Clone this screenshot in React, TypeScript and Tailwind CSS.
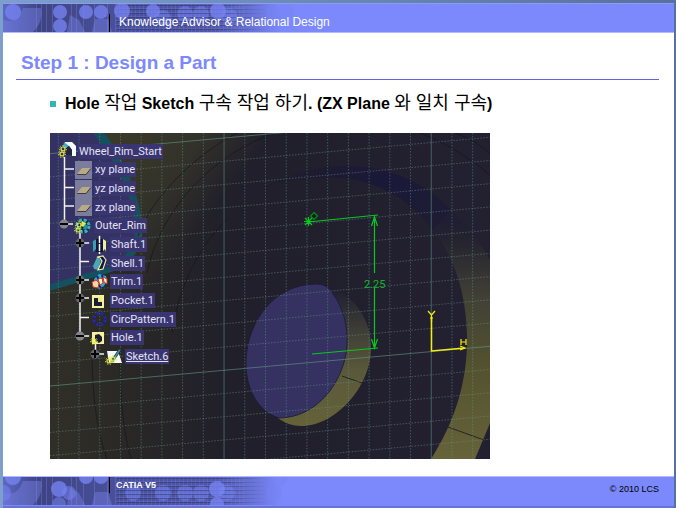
import type { ReactNode } from "react";

interface TreeNode {
  label: string;
  level: 0 | 1 | 2 | 3;
  icon: ReactNode;
  active?: boolean;
}

const INDENTS = {
  0: "pl-[9px]",
  1: "pl-[25px]",
  2: "pl-[41px]",
  3: "pl-[56px]",
};

function Gear({ x, y }: { x: number; y: number }) {
  return (
    <g transform={`translate(${x} ${y})`} fill="none" stroke="#e8ee3c">
      <circle r="2" strokeWidth="1.2" />
      <circle r="3.4" strokeWidth="1" strokeDasharray="1.4 1.6" />
    </g>
  );
}

function Icon({ children }: { children: ReactNode }) {
  return (
    <svg viewBox="0 0 18 18" className="size-[18px] shrink-0 overflow-visible" aria-hidden="true">
      {children}
    </svg>
  );
}

const partIcon = (
  <Icon>
    <path d="M6 0h7l4 4v10h-4V8l-3-4H6z" fill="#f4fbff" />
    <path d="M5 0l5 4-2 3-4-2z" fill="#3fa9bd" />
    <path d="M7 6l3-2 3 4v5H7z" fill="#24243c" />
    <Gear x={4} y={7} />
    <Gear x={3} y={12} />
  </Icon>
);

const planeIcon = (
  <Icon>
    <rect width="17" height="18" fill="#7c7c9c" />
    <path d="M2 13l5-6h9l-5 6z" fill="#b8aa86" />
    <path d="M2 13.500h9l5-6" fill="none" stroke="#3b3b44" />
  </Icon>
);

const bodyIcon = (
  <Icon>
    <circle cx="8" cy="9" r="7" fill="#15294e" />
    <circle cx="8" cy="9" r="6" fill="none" stroke="#39b0bd" strokeWidth="3" strokeDasharray="3 1.700" />
    <path d="M7 4l4 2-1 4-4-1z" fill="#d9ed50" />
    <path d="M10 7l3 2-2 4-3-1z" fill="#2a8c9f" />
    <Gear x={4} y={8} />
    <Gear x={3} y={13} />
  </Icon>
);

const shaftIcon = (
  <Icon>
    <path d="M2 5l4-2v12l-1-2-3 3z" fill="#3e9eb1" />
    <path d="M5 3h3v13H5zM9 3h3v13H9z" fill="#11163f" />
    <path d="M12 3l3 2v11l-1-3-2 2z" fill="#f2efa0" />
    <path d="M8.500 0v18" stroke="#fff" strokeWidth="1.500" strokeDasharray="7 1" />
  </Icon>
);

const shellIcon = (
  <Icon>
    <path d="M2 12L6 3l7-1 3 5-3 7-6 3z" fill="#0e1550" />
    <path d="M2 12L6 3l4 3-3 10-4-1z" fill="#4aa7b4" />
    <path d="M6 3l6-1 3 4-3 9-5 1 4-9-2-3z" fill="none" stroke="#f2efa0" strokeWidth="1.200" />
  </Icon>
);

const trimIcon = (
  <Icon>
    <path d="M3 6l5-5 7 2 1 4-3 6-5 3-4-4z" fill="#32a2d9" />
    <path d="M6 3l2 4M11 2l1 4M7 11l3 4" stroke="#0d2a69" strokeWidth="2" />
    <path d="M1 9l4-2 3 3-1 5-5-1z" fill="#f4d7a2" stroke="#c43b2c" />
    <path d="M7 6l4-1 1 5-3 2zM12 4l4 2v5l-3-2z" fill="#fff3c9" stroke="#c43b2c" />
  </Icon>
);

const pocketIcon = (
  <Icon>
    <path d="M1 3h12v13H1z" fill="#f5f1a0" />
    <path d="M3 6h4v4h4v4H3z" fill="#181d35" />
    <path d="M7 5h4v5H7z" fill="#eee982" />
  </Icon>
);

const patternIcon = (
  <Icon>
    <circle cx="8.500" cy="9" r="5.800" fill="none" stroke="#2528c8" strokeWidth="2.600" strokeDasharray="3 1.550" />
    <circle cx="8.500" cy="9" r="5.800" fill="none" stroke="#11112e" strokeWidth="1" strokeDasharray="1.200 3.350" />
  </Icon>
);

const holeIcon = (
  <Icon>
    <path d="M1 3h12v12H1z" fill="#f5f1a0" />
    <path d="M4 6l4-1 3 3v4l-3 2-4-2z" fill="#181d35" />
    <Gear x={3} y={12} />
  </Icon>
);

const sketchIcon = (
  <Icon>
    <path d="M1 3h11l4 12H3z" fill="#f6f8f5" />
    <path d="M5 13l8-12 2 1-8 12z" fill="#3b8fa5" stroke="#1d3550" strokeWidth="0.800" />
    <path d="M3 15l2-2 2 1z" fill="#222" />
    <Gear x={3} y={13} />
    <Gear x={7} y={11} />
  </Icon>
);

const NODES: TreeNode[] = [
  { label: "Wheel_Rim_Start", level: 0, icon: partIcon },
  { label: "xy plane", level: 1, icon: planeIcon },
  { label: "yz plane", level: 1, icon: planeIcon },
  { label: "zx plane", level: 1, icon: planeIcon },
  { label: "Outer_Rim", level: 1, icon: bodyIcon },
  { label: "Shaft.1", level: 2, icon: shaftIcon },
  { label: "Shell.1", level: 2, icon: shellIcon },
  { label: "Trim.1", level: 2, icon: trimIcon },
  { label: "Pocket.1", level: 2, icon: pocketIcon },
  { label: "CircPattern.1", level: 2, icon: patternIcon },
  { label: "Hole.1", level: 2, icon: holeIcon },
  { label: "Sketch.6", level: 3, icon: sketchIcon, active: true },
];

function SpecTree() {
  return (
    <ul className="absolute top-[9px] left-0 grid h-[224px] grid-rows-12 font-[Roboto,sans-serif] text-[11px] leading-[15px] text-[#e4e3f4]">
      {NODES.map((node) => (
        <li key={node.label} className={`flex min-h-0 items-center gap-px ${INDENTS[node.level]}`}>
          {node.icon}
          <span className={`bg-[#393570] px-px whitespace-nowrap ${node.active ? "underline" : ""}`}>{node.label}</span>
        </li>
      ))}
    </ul>
  );
}

function Toggle({ x, y, open }: { x: number; y: number; open?: boolean }) {
  return (
    <g transform={`translate(${x} ${y})`}>
      <path d="M4 0h5" stroke="#f0f0f0" strokeWidth="1.500" />
      <circle r="4.500" fill={open ? "#84848a" : "#66676c"} />
      <path d={open ? "M-4 0h8" : "M-4 0h8M0 -4v8"} stroke="#050505" strokeWidth="2" />
    </g>
  );
}

const GRID_X = Array.from({ length: 22 }, (_, i) => 8.3 + i * 20.72);
const GRID_Y = Array.from({ length: 17 }, (_, i) => 20.7 + i * 23.23);

function Scene() {
  return (
    <svg viewBox="0 0 440 326" className="block w-full" role="img" aria-label="Sketch of the hole position on the wheel rim">
      <defs>
        <linearGradient id="ground" x1="0" y1="0" x2="1" y2="0">
          <stop offset="0" stopColor="#302f27" />
          <stop offset="0.150" stopColor="#2a2926" />
          <stop offset="0.400" stopColor="#211f2a" />
          <stop offset="1" stopColor="#232031" />
        </linearGradient>
        <linearGradient id="upper" gradientUnits="userSpaceOnUse" x1="70" y1="0" x2="165" y2="75">
          <stop offset="0" stopColor="#3a392a" />
          <stop offset="0.500" stopColor="#34332a" />
          <stop offset="1" stopColor="#34332a" stopOpacity="0" />
        </linearGradient>
        <linearGradient id="rim" x1="0" y1="0" x2="0" y2="1">
          <stop offset="0" stopColor="#1d1c34" />
          <stop offset="0.120" stopColor="#24232f" />
          <stop offset="0.350" stopColor="#414035" />
          <stop offset="0.650" stopColor="#55532f" />
          <stop offset="1" stopColor="#66633a" />
        </linearGradient>
        <linearGradient id="wall" x1="0" y1="0" x2="0" y2="1">
          <stop offset="0" stopColor="#1c1b31" />
          <stop offset="0.250" stopColor="#363535" />
          <stop offset="0.600" stopColor="#59583a" />
          <stop offset="1" stopColor="#656239" />
        </linearGradient>
        <linearGradient id="shade" x1="0" y1="0" x2="1" y2="0.500">
          <stop offset="0" stopColor="#201e2c" />
          <stop offset="0.600" stopColor="#1a1838" />
          <stop offset="1" stopColor="#1d1c34" />
        </linearGradient>
      </defs>

      <rect width="440" height="326" fill="url(#ground)" />
      <path d="M50 0h200L96 160 80 130z" fill="url(#upper)" />
      <path d="M43 0h11c20 25 38 65 38 97 0 24-16 38-34 43L0 158v-7z" fill="#15505f" />
      <path d="M0 0h43c20 24 39 60 42 94 1 24-15 37-33 42L0 151z" fill="#343163" />
      <g fill="none" stroke="#15151d" strokeWidth="0.700">
        <path d="M187 0C145 22 100 66 88 103M225 0C165 20 110 75 97 140M178 86C150 110 128 155 122 200M42 216c0 42 4 80 15 110M70 218c0 45 3 80 11 108" />
        <path d="M370 0c26 10 50 25 70 42" />
      </g>

      <path d="M215 54c20-10 45-21 80-21 42 0 78 14 106 44l-18 20c-28-36-63-52-100-52-28 0-50 3-68 9z" fill="url(#shade)" />
      <path d="M401 77c16 15 29 32 39 50v163l-15 36h-44c24-37 37-79 36-124-1-43-13-78-34-105z" fill="url(#rim)" />
      <path d="M398 294l36 13M405 0c16 6 26 12 35 21" fill="none" stroke="#171720" strokeWidth="0.800" />
      <path d="M265 151c31 2 56 29 56 64 0 38-35 78-70 78-8 0-17-3-23-8z" fill="url(#wall)" />
      <path d="M229 285c-21-6-34-30-33-58 2-41 30-76 70-76 8 0 12 3 15 7 13 17 17 35 16 55-3 37-31 72-68 72z" fill="#353160" stroke="#1b1935" strokeWidth="0.800" />
      <path d="M292 243l20 7" stroke="#171720" strokeWidth="0.800" />

      <g stroke="#659889" strokeWidth="0.800" fill="none">
        {GRID_X.map((x, i) => {
          const major = i === 8 || i === 18;
          return (
            <path
              key={x}
              d={`M${x} 0V326`}
              strokeOpacity={major ? 0.7 : 0.6}
              strokeDasharray={major ? undefined : "1.500 1.500"}
            />
          );
        })}
        {GRID_Y.map((y, i) => {
          const major = i === 0 || i === 10;
          return (
            <path
              key={y}
              d={`M0 ${y}L440 ${y - 39.7}`}
              strokeOpacity={major ? 0.75 : 0.6}
              strokeDasharray={major ? undefined : "1.500 1.500"}
            />
          );
        })}
      </g>

      <g stroke="#08c820" strokeWidth="1.200" fill="none">
        <path d="M258 89l70-7M262 221l66-6" />
        <path d="M324.500 83v57M324.500 154v61M321.500 93l3-9 3 9M321.500 206l3 9 3-9" />
        <path d="M254 88.500h9M258.500 84v9M255 85l7 7M262 85l-7 7" />
        <path d="M264 79.500l3.500 3.500-3.500 3.500-3.500-3.500z" fill="#03240c" stroke="#0a8a22" />
      </g>
      <text x="314" y="155" fill="#0fb82a" fontFamily="Roboto, sans-serif" fontSize="11">
        2.25
      </text>
      <g stroke="#f2ee10" strokeWidth="1.500" fill="none">
        <path d="M381.500 184v34l33-3" />
        <path d="M378 178l3.500 4 3.500-4M381.500 182v7M380 185h3M411 206v6M416 206v6M411 209h5M410 213l5 2-5 2" strokeWidth="1.200" />
      </g>

      <g stroke="#f2f2f2" strokeWidth="1.500">
        <path d="M14.500 24v65M15 36h9M15 54.500h9M15 73h9M30 98v104M30 128.500h9M30 184.500h9M45.500 208v12" />
      </g>
      <Toggle x={14} y={91} open />
      <Toggle x={30} y={110} />
      <Toggle x={30} y={147} />
      <Toggle x={30} y={165} />
      <Toggle x={30} y={203} open />
      <Toggle x={45} y={221} />
    </svg>
  );
}

const TOP_DOTS = [
  [10, 8, 8], [57, 8, 7], [57, 22, 7], [83, 8, 7], [98, 8, 7], [119, 7, 8], [150, 7, 7], [215, 7, 8], [283, 8, 8],
];
const TOP_FAINT = [
  [182, 10, 8], [198, 10, 8], [160, 14, 8], [226, 12, 8], [271, 10, 8],
];
const BOTTOM_DOTS = [
  [10, 0, 8], [56, 12, 8], [83, 0, 7], [98, 0, 7], [214, 12, 8], [214, 27, 7], [277, 2, 7],
];
const BOTTOM_FAINT = [
  [0, 16, 8], [66, 16, 7], [56, 27, 7], [130, 16, 8], [160, 16, 8], [182, 16, 8], [198, 16, 8], [224, 16, 8], [271, 16, 8],
];

interface BannerArtProps {
  id: string;
  dots: number[][];
  faintDots: number[][];
}

function BannerArt({ id, dots, faintDots }: BannerArtProps) {
  return (
    <svg viewBox="0 0 300 28" className="absolute top-0 left-0 h-7 w-[300px]" aria-hidden="true">
      <defs>
        <linearGradient id={`${id}-fade`}>
          <stop offset="0" stopColor="#33376c" stopOpacity="0.400" />
          <stop offset="0.120" stopColor="#33376c" stopOpacity="0.850" />
          <stop offset="0.360" stopColor="#33376c" stopOpacity="0.700" />
          <stop offset="0.700" stopColor="#33376c" stopOpacity="0.600" />
          <stop offset="0.930" stopColor="#33376c" stopOpacity="0" />
        </linearGradient>
        <linearGradient id={`${id}-lines`} gradientUnits="userSpaceOnUse" x1="112" y1="0" x2="265" y2="0">
          <stop offset="0" stopColor="#262a56" stopOpacity="0.450" />
          <stop offset="0.700" stopColor="#262a56" stopOpacity="0.400" />
          <stop offset="1" stopColor="#262a56" stopOpacity="0" />
        </linearGradient>
        <pattern id={`${id}-mesh`} width="4" height="4" patternUnits="userSpaceOnUse">
          <path d="M0 0.500h4M0.500 0v4" stroke="#7984ee" strokeOpacity="0.250" />
        </pattern>
      </defs>
      <rect width="300" height="28" fill={`url(#${id}-fade)`} />
      <path d="M0 28V16c8 2 14 0 17-6l3-6h18c2 8-1 18-8 24zM64 28l3-17 9 5 6 12zM89 28l3-13h13l4 13z" fill="#7580e6" fillOpacity="0.450" />
      <path d="M33.500 0v28M38.500 0v28M43.500 0v28M49.500 0v28M68.500 0v28M73.500 0v28M80.500 0v28M91.500 0v28M104.500 0v28" stroke="#8790f2" strokeOpacity="0.300" />
      {faintDots.map(([x, y, r]) => (
        <circle key={`${x}-${y}`} cx={x} cy={y} r={r} fill="#7583f2" fillOpacity="0.550" />
      ))}
      <path d="M112 0h130v28H112z" fill={`url(#${id}-mesh)`} />
      <path
        d="M114 1h150v1H114zM114 5h150v1H114zM114 9h150v1H114zM114 13h150v1H114zM114 17h150v1H114zM114 21h150v1H114zM114 25h150v1H114z"
        fill={`url(#${id}-lines)`}
      />
      {dots.map(([x, y, r]) => (
        <circle key={`${x}-${y}`} cx={x} cy={y} r={r} fill="#7886f6" fillOpacity="0.750" />
      ))}
    </svg>
  );
}

export default function App() {
  return (
    <div className="flex min-h-screen flex-col bg-gradient-to-r from-[#7d9fcb] to-[#55729c] pt-[3px] pr-0.5 pl-[3px] font-['Liberation_Sans','Noto_Sans_CJK_KR',sans-serif]">
      <header className="relative flex h-[30px] items-center border-y border-t-[#8e9af8] border-b-[#b3b9fd] bg-[#7b89fc]">
        <BannerArt id="top" dots={TOP_DOTS} faintDots={TOP_FAINT} />
        <div className="relative ml-[106px] flex h-[18px] items-start self-end border-l border-black pl-[9px]">
          <p className="text-xs leading-4 text-white">Knowledge Advisor &amp; Relational Design</p>
        </div>
      </header>

      <main className="flex-1 bg-white pr-[15px] pb-4 pl-[13px]">
        <h1 className="border-b border-[#6464e0] pt-[18px] pb-1 pl-[5px] text-[19px] leading-6 font-bold text-[#7b89fc]">
          Step 1 : Design a Part
        </h1>
        <ul className="pt-3 pl-[34px]">
          <li className="flex items-center gap-[9px] text-base leading-6 font-bold text-black">
            <span className="size-1.5 shrink-0 bg-[#35b5b2]" />
            <p>
              Hole <span className="text-lg leading-5 font-normal">작업</span> Sketch{" "}
              <span className="text-lg leading-5 font-normal">구속 작업 하기</span>. (ZX Plane{" "}
              <span className="text-lg leading-5 font-normal">와 일치 구속</span>)
            </p>
          </li>
        </ul>
        <figure className="relative mt-[17px] ml-[34px] w-[440px] max-w-full">
          <Scene />
          <SpecTree />
        </figure>
      </main>

      <footer className="relative flex h-8 justify-between border-t border-b-2 border-t-[#b3b9fd] border-b-[#6672d4] bg-[#7b89fc] text-[9px]">
        <BannerArt id="bottom" dots={BOTTOM_DOTS} faintDots={BOTTOM_FAINT} />
        <div className="relative ml-[106px] h-4 border-l border-black pl-1.5 leading-4 font-bold text-white">CATIA V5</div>
        <p className="relative pt-1.5 pr-[15px] leading-3 text-black">© 2010 LCS</p>
      </footer>
    </div>
  );
}
